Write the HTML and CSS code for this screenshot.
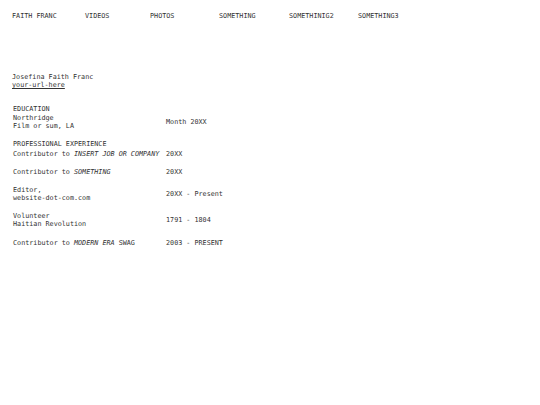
FILE: index.html
```html
<!DOCTYPE html>
<html>
<head>
<meta charset="utf-8">
<link rel="stylesheet" href="styles.css">
</head>
<body>
<nav class="nav">
  <a class="nav-item w1">FAITH FRANC</a>
  <a class="nav-item w2">VIDEOS</a>
  <a class="nav-item w3">PHOTOS</a>
  <a class="nav-item w4">SOMETHING</a>
  <a class="nav-item w5">SOMETHINIG2</a>
  <a class="nav-item w6">SOMETHING3</a>
</nav>
<header class="ident">
  <div>Josefina Faith Franc</div>
  <a class="url" href="#">your-url-here</a>
</header>
<section class="section edu">
  <div class="heading">EDUCATION</div>
  <div class="row">
    <div class="left">Northridge<br>Film or sum, LA</div>
    <div class="right">Month 20XX</div>
  </div>
</section>
<section class="section pro">
  <div class="heading">PROFESSIONAL EXPERIENCE</div>
  <div class="rows">
    <div class="row">
      <div class="left">Contributor to <i>INSERT JOB OR COMPANY</i></div>
      <div class="right">20XX</div>
    </div>
    <div class="row">
      <div class="left">Contributor to <i>SOMETHING</i></div>
      <div class="right">20XX</div>
    </div>
    <div class="row">
      <div class="left">Editor,<br>website-dot-com.com</div>
      <div class="right">20XX - Present</div>
    </div>
    <div class="row">
      <div class="left">Volunteer<br>Haitian Revolution</div>
      <div class="right">1791 - 1804</div>
    </div>
    <div class="row last">
      <div class="left">Contributor to <i>MODERN ERA</i> SWAG</div>
      <div class="right">2003 - PRESENT</div>
    </div>
  </div>
</section>
</body>
</html>
```
FILE: styles.css
```css
html, body {
  margin: 0;
  padding: 0;
  background: #fff;
}
body {
  font-family: "DejaVu Sans Mono", monospace;
  font-size: 6.75px;
  line-height: 8px;
  color: #333;
  padding: 12px 0 0 12px;
}
.nav {
  display: flex;
}
.nav-item {
  color: #333;
  text-decoration: none;
}
.w1 { width: 73px; }
.w2 { width: 65px; }
.w3 { width: 69px; }
.w4 { width: 70px; }
.w5 { width: 69px; }
.w6 { width: 69px; }
.ident {
  margin-top: 53px;
}
.url {
  color: #333;
  text-decoration: underline;
}
.section {
  padding-left: 1px;
}
.edu {
  margin-top: 16px;
}
.edu .heading {
  margin-bottom: 1px;
}
.pro {
  margin-top: 10px;
}
.pro .heading {
  margin-bottom: 2px;
}
.rows {
  display: flex;
  flex-direction: column;
  gap: 10px;
}
.row {
  display: grid;
  grid-template-columns: 153px auto;
  align-items: center;
}
.row.last {
  margin-top: 1px;
}
i {
  font-style: oblique;
}
```
